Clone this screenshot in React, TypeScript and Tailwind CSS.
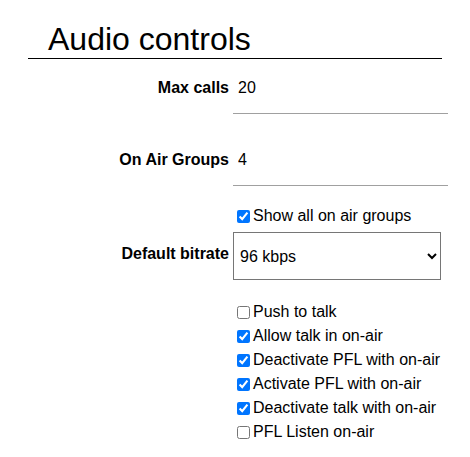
import React from "react";

const font = { fontFamily: '"Liberation Sans", Arial, sans-serif' };

function Check({ label, checked }: { label: string; checked: boolean }) {
  return (
    <label className="flex h-[24px] items-center text-[16px] text-black">
      <input type="checkbox" defaultChecked={checked} className="m-0 ml-[4px] mr-[3px] h-[13px] w-[13px]" />
      <span>{label}</span>
    </label>
  );
}

export default function App() {
  return (
    <div className="w-[470px] h-[457px] bg-white text-black pt-[21px] font-['Liberation_Sans',Arial,sans-serif]" style={font}>
      <h1 className="ml-[28px] w-[414px] border-b border-black pl-[20px] text-[32px] leading-[37px] font-normal">
        Audio controls
      </h1>

      <div className="mt-[3px] flex items-center">
        <div className="w-[229px] text-right text-[16px] font-bold">Max calls</div>
        <input
          defaultValue="20"
          className="ml-[4px] h-[52px] w-[215px] border-b border-[#a0a0a0] pl-[5px] text-[16px] outline-none"
        />
      </div>

      <div className="mt-[20px] flex items-center">
        <div className="w-[229px] text-right text-[16px] font-bold">On Air Groups</div>
        <input
          defaultValue="4"
          className="ml-[4px] h-[52px] w-[215px] border-b border-[#a0a0a0] pl-[5px] text-[16px] outline-none"
        />
      </div>

      <div className="mt-[20px] ml-[233px] flex h-[20px] items-center">
        <Check label="Show all on air groups" checked={true} />
      </div>

      <div className="mt-[6px] flex items-center">
        <div className="w-[229px] pb-[4px] text-right text-[16px] font-bold">Default bitrate</div>
        <select
          defaultValue="96"
          className="ml-[4px] h-[48px] w-[208px] rounded-none border border-[#767676] bg-white pl-[2px] text-[16px] text-black"
        >
          <option value="32">32 kbps</option>
          <option value="64">64 kbps</option>
          <option value="96">96 kbps</option>
          <option value="128">128 kbps</option>
        </select>
      </div>

      <div className="mt-[20px] ml-[233px] flex flex-col">
        <Check label="Push to talk" checked={false} />
        <Check label="Allow talk in on-air" checked={true} />
        <Check label="Deactivate PFL with on-air" checked={true} />
        <Check label="Activate PFL with on-air" checked={true} />
        <Check label="Deactivate talk with on-air" checked={true} />
        <Check label="PFL Listen on-air" checked={false} />
      </div>
    </div>
  );
}
